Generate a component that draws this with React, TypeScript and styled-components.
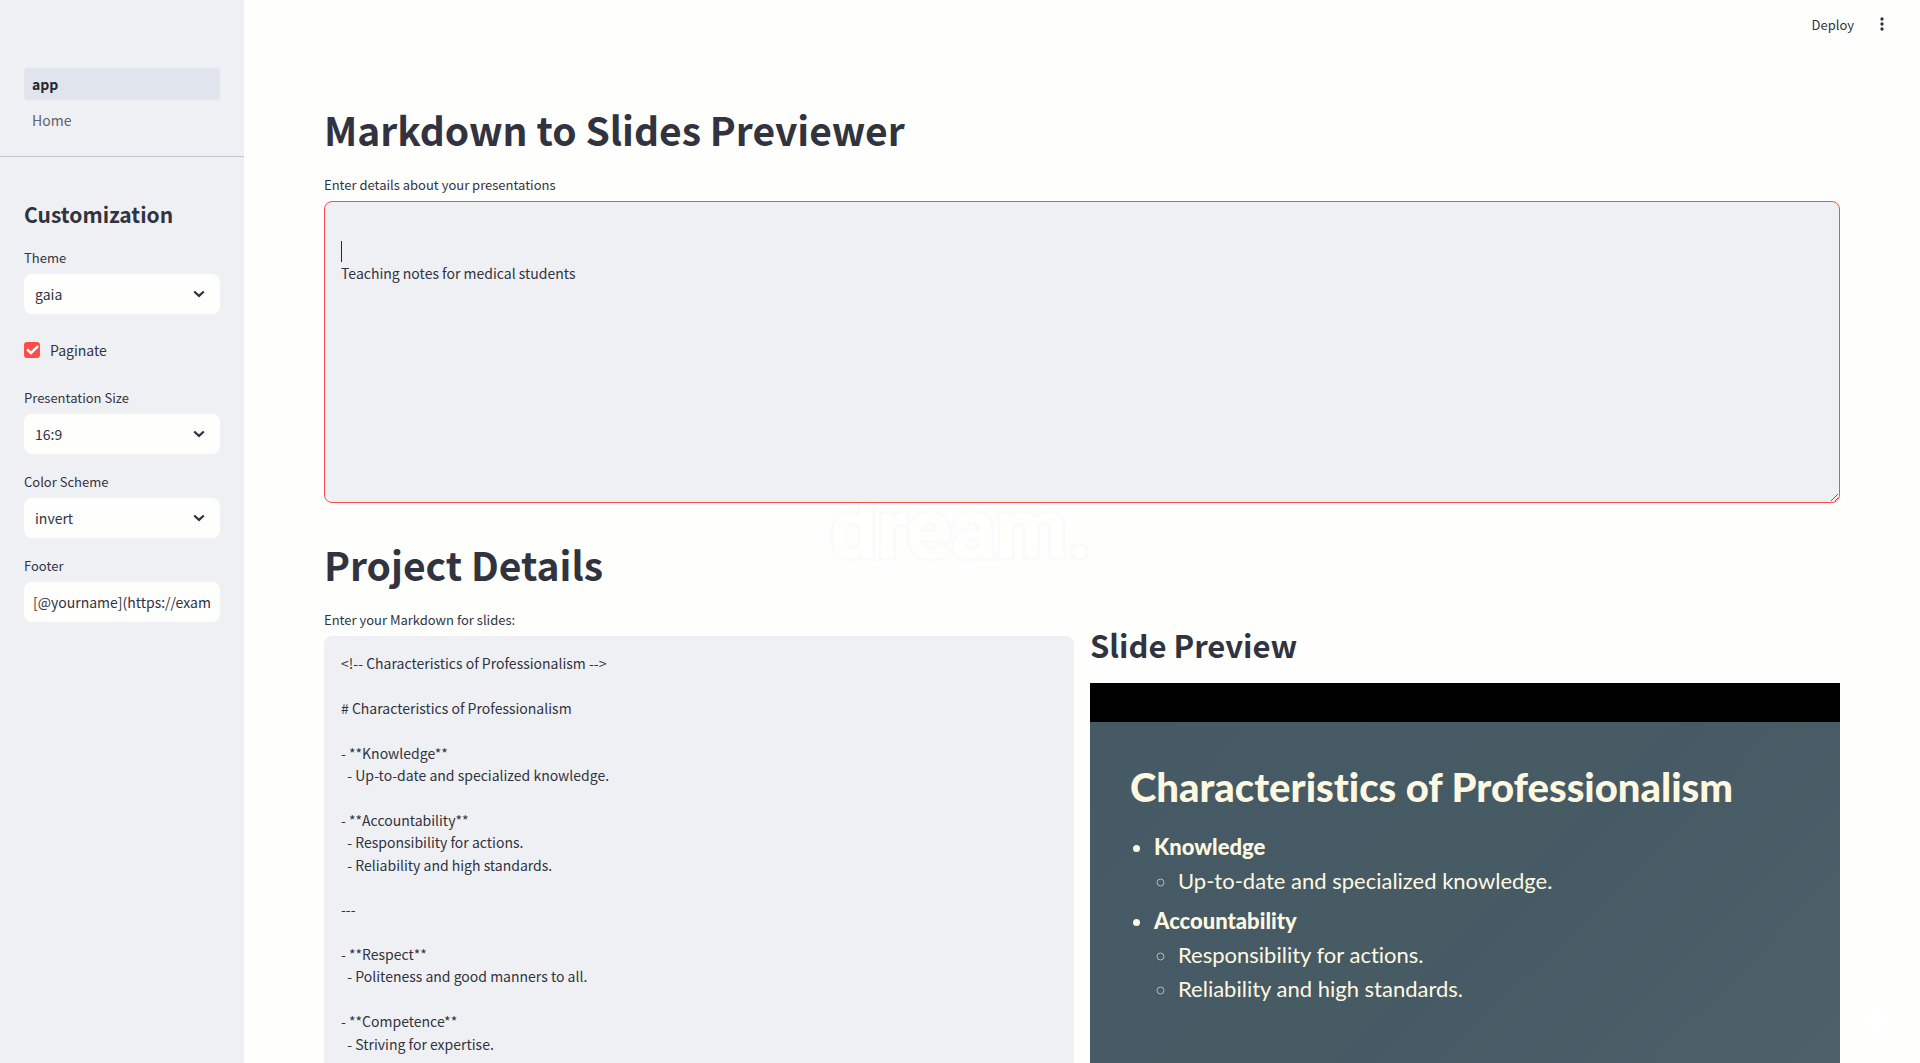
import React from "react";
import styled, { createGlobalStyle } from "styled-components";

const ink = "#31333f";
const panel = "#eff0f4";
const paper = "#fefefd";
const red = "#ff4b4b";
const sans = `"Noto Sans CJK SC", "Noto Sans", sans-serif`;

const GlobalStyle = createGlobalStyle`
  *, *::before, *::after { box-sizing: border-box; }
  body { margin: 0; background: ${paper}; color: ${ink}; font-family: ${sans}; }
  button, input, select, textarea { font-family: inherit; color: inherit; }
`;

const Shell = styled.div`
  display: grid;
  grid-template-columns: 244px minmax(0, 1fr);
  height: 100vh;
  overflow: hidden;
`;

/* Sidebar */

const Sidebar = styled.aside`
  background: ${panel};
  overflow: hidden;
`;

const PageNav = styled.nav`
  display: flex;
  flex-direction: column;
  gap: 4px;
  padding: 68px 24px 20px;
  border-bottom: 1px solid #c3c5ce;
`;

const PageLink = styled.a<{ $active?: boolean }>`
  display: flex;
  align-items: center;
  height: 32px;
  padding: 0 8px;
  border-radius: 4px;
  font-size: 14px;
  text-decoration: none;
  font-weight: ${(p) => (p.$active ? 600 : 400)};
  color: ${(p) => (p.$active ? "#262730" : "#5f616f")};
  background: ${(p) => (p.$active ? "#e0e4ed" : "transparent")};
`;

const Settings = styled.form`
  display: flex;
  flex-direction: column;
  gap: 16px;
  padding: 41px 24px;
`;

const SettingsTitle = styled.h2`
  margin: 0;
  font-size: 21px;
  line-height: 32px;
  font-weight: 600;
`;

const Field = styled.div`
  display: flex;
  flex-direction: column;
  gap: 4px;
`;

const Label = styled.label`
  display: block;
  font-size: 13px;
  line-height: 24px;
`;

const SelectBox = styled.div`
  display: grid;
  align-items: center;
  > * { grid-area: 1 / 1; }
  > svg { justify-self: end; margin-right: 15px; pointer-events: none; }
`;

const Select = styled.select`
  appearance: none;
  width: 100%;
  height: 40px;
  padding: 0 32px 0 11px;
  border: 0;
  border-radius: 8px;
  background: ${paper};
  font-size: 14px;
`;

const TextInput = styled.input`
  width: 100%;
  height: 40px;
  padding: 0;
  border: solid ${paper};
  border-width: 0 9px;
  border-radius: 8px;
  background: ${paper};
  font-size: 14px;
`;

const CheckRow = styled.label`
  display: flex;
  align-items: center;
  gap: 10px;
  height: 40px;
  font-size: 14px;
`;

const CheckMark = styled.span`
  display: grid;
  place-items: center;
  > * { grid-area: 1 / 1; }
  > svg { pointer-events: none; }
`;

const Checkbox = styled.input`
  appearance: none;
  width: 16px;
  height: 16px;
  margin: 0;
  border-radius: 3px;
  background: ${red};
`;

/* Main area */

const Main = styled.main`
  position: relative;
  z-index: 0;
  display: flex;
  flex-direction: column;
  overflow: hidden;
`;

const Toolbar = styled.header`
  display: flex;
  flex: none;
  justify-content: flex-end;
  align-items: center;
  gap: 10px;
  height: 48px;
  padding: 0 24px;
`;

const ToolButton = styled.button`
  display: flex;
  align-items: center;
  justify-content: center;
  min-width: 28px;
  height: 28px;
  padding: 0 4px;
  border: 0;
  background: none;
  font-size: 13px;
`;

const Content = styled.div`
  flex: none;
  padding: 48px 80px 0;
`;

const Title = styled.h1`
  margin: 0;
  font-size: 39px;
  line-height: 53px;
  font-weight: 700;
  padding: 7px 0 17px;
`;

const Columns = styled.div`
  display: grid;
  grid-template-columns: repeat(2, minmax(0, 1fr));
  gap: 16px;
`;

const Area = styled.textarea<{ $focused?: boolean; $height: number }>`
  display: block;
  width: 100%;
  height: ${(p) => p.$height}px;
  padding: 15px 16px;
  border: 1px solid ${(p) => (p.$focused ? red : panel)};
  border-radius: 8px;
  outline: 0;
  background: ${panel};
  caret-color: transparent;
  font-size: 14px;
  line-height: 1.6;
  resize: ${(p) => (p.$focused ? "vertical" : "none")};
`;

const CaretHost = styled.div`
  position: relative;
`;

const Caret = styled.span`
  position: absolute;
  left: 17px;
  top: 40px;
  width: 1px;
  height: 21px;
  background: #262730;
`;

const BriefField = styled.div`
  display: grid;
  gap: 4px;
  margin-bottom: 28px;
`;

const PreviewTitle = styled.h2`
  margin: 0;
  padding: 15px 0 17px;
  font-size: 31px;
  line-height: 43px;
  font-weight: 600;
`;

const Preview = styled.section`
  min-width: 0;
`;

const Stage = styled.div`
  padding: 39px 0;
  background: #000;
`;

const Slide = styled.article`
  aspect-ratio: 16 / 9;
  padding: 40px;
  background:
    linear-gradient(135deg, rgba(136, 136, 136, 0), rgba(136, 136, 136, 0.02) 50%,
      rgba(255, 255, 255, 0) 50%, rgba(255, 255, 255, 0.05)),
    #455a64;
  color: #fff8e1;
  font-family: Lato, sans-serif;
  font-variant-ligatures: none;
`;

const SlideTitle = styled.h1`
  margin: 0;
  font-size: 40px;
  line-height: 50px;
  font-weight: 900;
`;

const Points = styled.ul`
  margin: 18px 0 0;
  padding-left: 24px;
  font-size: 22px;
  line-height: 34px;
  > li + li { margin-top: 6px; }
  strong { font-weight: 900; }
`;

const SubPoints = styled.ul`
  margin: 0;
  padding-left: 24px;
  li::marker { color: #b9bcb3; }
`;

/* Faint wallpaper behind the page */

const Wallpaper = styled.div`
  position: absolute;
  z-index: -1;
  inset: 0;
  pointer-events: none;
`;

const WallWord = styled.span`
  position: absolute;
  left: 586px;
  top: 482px;
  font: 700 83px/96px Roboto, sans-serif;
  color: #fffffb;
  -webkit-text-stroke: 6px #fbfbfd;
  paint-order: stroke fill;
`;

const WallFlame = styled.svg`
  position: absolute;
  right: 28px;
  bottom: 30px;
`;

const Chevron = () => (
  <svg width="12" height="8" viewBox="0 0 12 8" fill="none" stroke={ink} strokeWidth="2.200" aria-hidden="true">
    <path d="M1.200 1.500L6 5.900l4.800-4.400" />
  </svg>
);

const MARKDOWN = `<!-- Characteristics of Professionalism -->

# Characteristics of Professionalism

- **Knowledge**
  - Up-to-date and specialized knowledge.

- **Accountability**
  - Responsibility for actions.
  - Reliability and high standards.

---

- **Respect**
  - Politeness and good manners to all.

- **Competence**
  - Striving for expertise.
`;

const SLIDE = [
  { head: "Knowledge", items: ["Up-to-date and specialized knowledge."] },
  { head: "Accountability", items: ["Responsibility for actions.", "Reliability and high standards."] },
];

function Choice({ id, label, options }: { id: string; label: string; options: string[] }) {
  return (
    <Field>
      <Label htmlFor={id}>{label}</Label>
      <SelectBox>
        <Select id={id} defaultValue={options[0]}>
          {options.map((o) => (
            <option key={o}>{o}</option>
          ))}
        </Select>
        <Chevron />
      </SelectBox>
    </Field>
  );
}

export default function App() {
  return (
    <>
      <GlobalStyle />
      <Shell>
        <Sidebar>
          <PageNav>
            <PageLink href="#app" $active>app</PageLink>
            <PageLink href="#home">Home</PageLink>
          </PageNav>
          <Settings>
            <SettingsTitle>Customization</SettingsTitle>
            <Choice id="theme" label="Theme" options={["gaia"]} />
            <CheckRow>
              <CheckMark>
                <Checkbox type="checkbox" defaultChecked />
                <svg width="13" height="10" viewBox="0 0 17 13" fill="none" aria-hidden="true">
                  <path d="M6.500 12.600L.3 6.900l2.200-2.300 4 3.600L14.800.4l2.200 2.200z" fill="#fff" />
                </svg>
              </CheckMark>
              Paginate
            </CheckRow>
            <Choice id="size" label="Presentation Size" options={["16:9"]} />
            <Choice id="scheme" label="Color Scheme" options={["invert"]} />
            <Field>
              <Label htmlFor="footer">Footer</Label>
              <TextInput id="footer" type="text" defaultValue="[@yourname](https://example.com)" />
            </Field>
          </Settings>
        </Sidebar>

        <Main>
          <Wallpaper aria-hidden="true">
            <WallWord>dream.</WallWord>
            <WallFlame width="36" height="32" viewBox="0 0 36 32">
              <path d="M17 1c5 5 12 9 16 15 1 6-6 11-14 14C11 28 3 24 1 17c4-1 8 4 12 5-3-5-6-9-3-12 4 1 6 6 9 8-1-6-4-11-2-17z" fill="#fff" />
            </WallFlame>
          </Wallpaper>
          <Toolbar>
            <ToolButton type="button">Deploy</ToolButton>
            <ToolButton type="button" aria-label="Menu">
              <svg width="20" height="20" viewBox="0 0 24 24" fill={ink} aria-hidden="true">
                <circle cx="12" cy="6" r="2" />
                <circle cx="12" cy="12" r="2" />
                <circle cx="12" cy="18" r="2" />
              </svg>
            </ToolButton>
          </Toolbar>
          <Content>
            <Title>Markdown to Slides Previewer</Title>
            <BriefField>
              <Label htmlFor="brief">Enter details about your presentations</Label>
              <CaretHost>
                <Area
                  id="brief"
                  $focused
                  $height={302}
                  defaultValue={"\n\nTeaching notes for medical students\n"}
                />
                <Caret />
              </CaretHost>
            </BriefField>
            <Title>Project Details</Title>
            <Columns>
              <Field>
                <Label htmlFor="markdown">Enter your Markdown for slides:</Label>
                <Area id="markdown" $height={500} defaultValue={MARKDOWN} />
              </Field>
              <Preview>
                <PreviewTitle>Slide Preview</PreviewTitle>
                <Stage>
                  <Slide>
                    <SlideTitle>Characteristics of Professionalism</SlideTitle>
                    <Points>
                      {SLIDE.map((p) => (
                        <li key={p.head}>
                          <strong>{p.head}</strong>
                          <SubPoints>
                            {p.items.map((t) => (
                              <li key={t}>{t}</li>
                            ))}
                          </SubPoints>
                        </li>
                      ))}
                    </Points>
                  </Slide>
                </Stage>
              </Preview>
            </Columns>
          </Content>
        </Main>
      </Shell>
    </>
  );
}
